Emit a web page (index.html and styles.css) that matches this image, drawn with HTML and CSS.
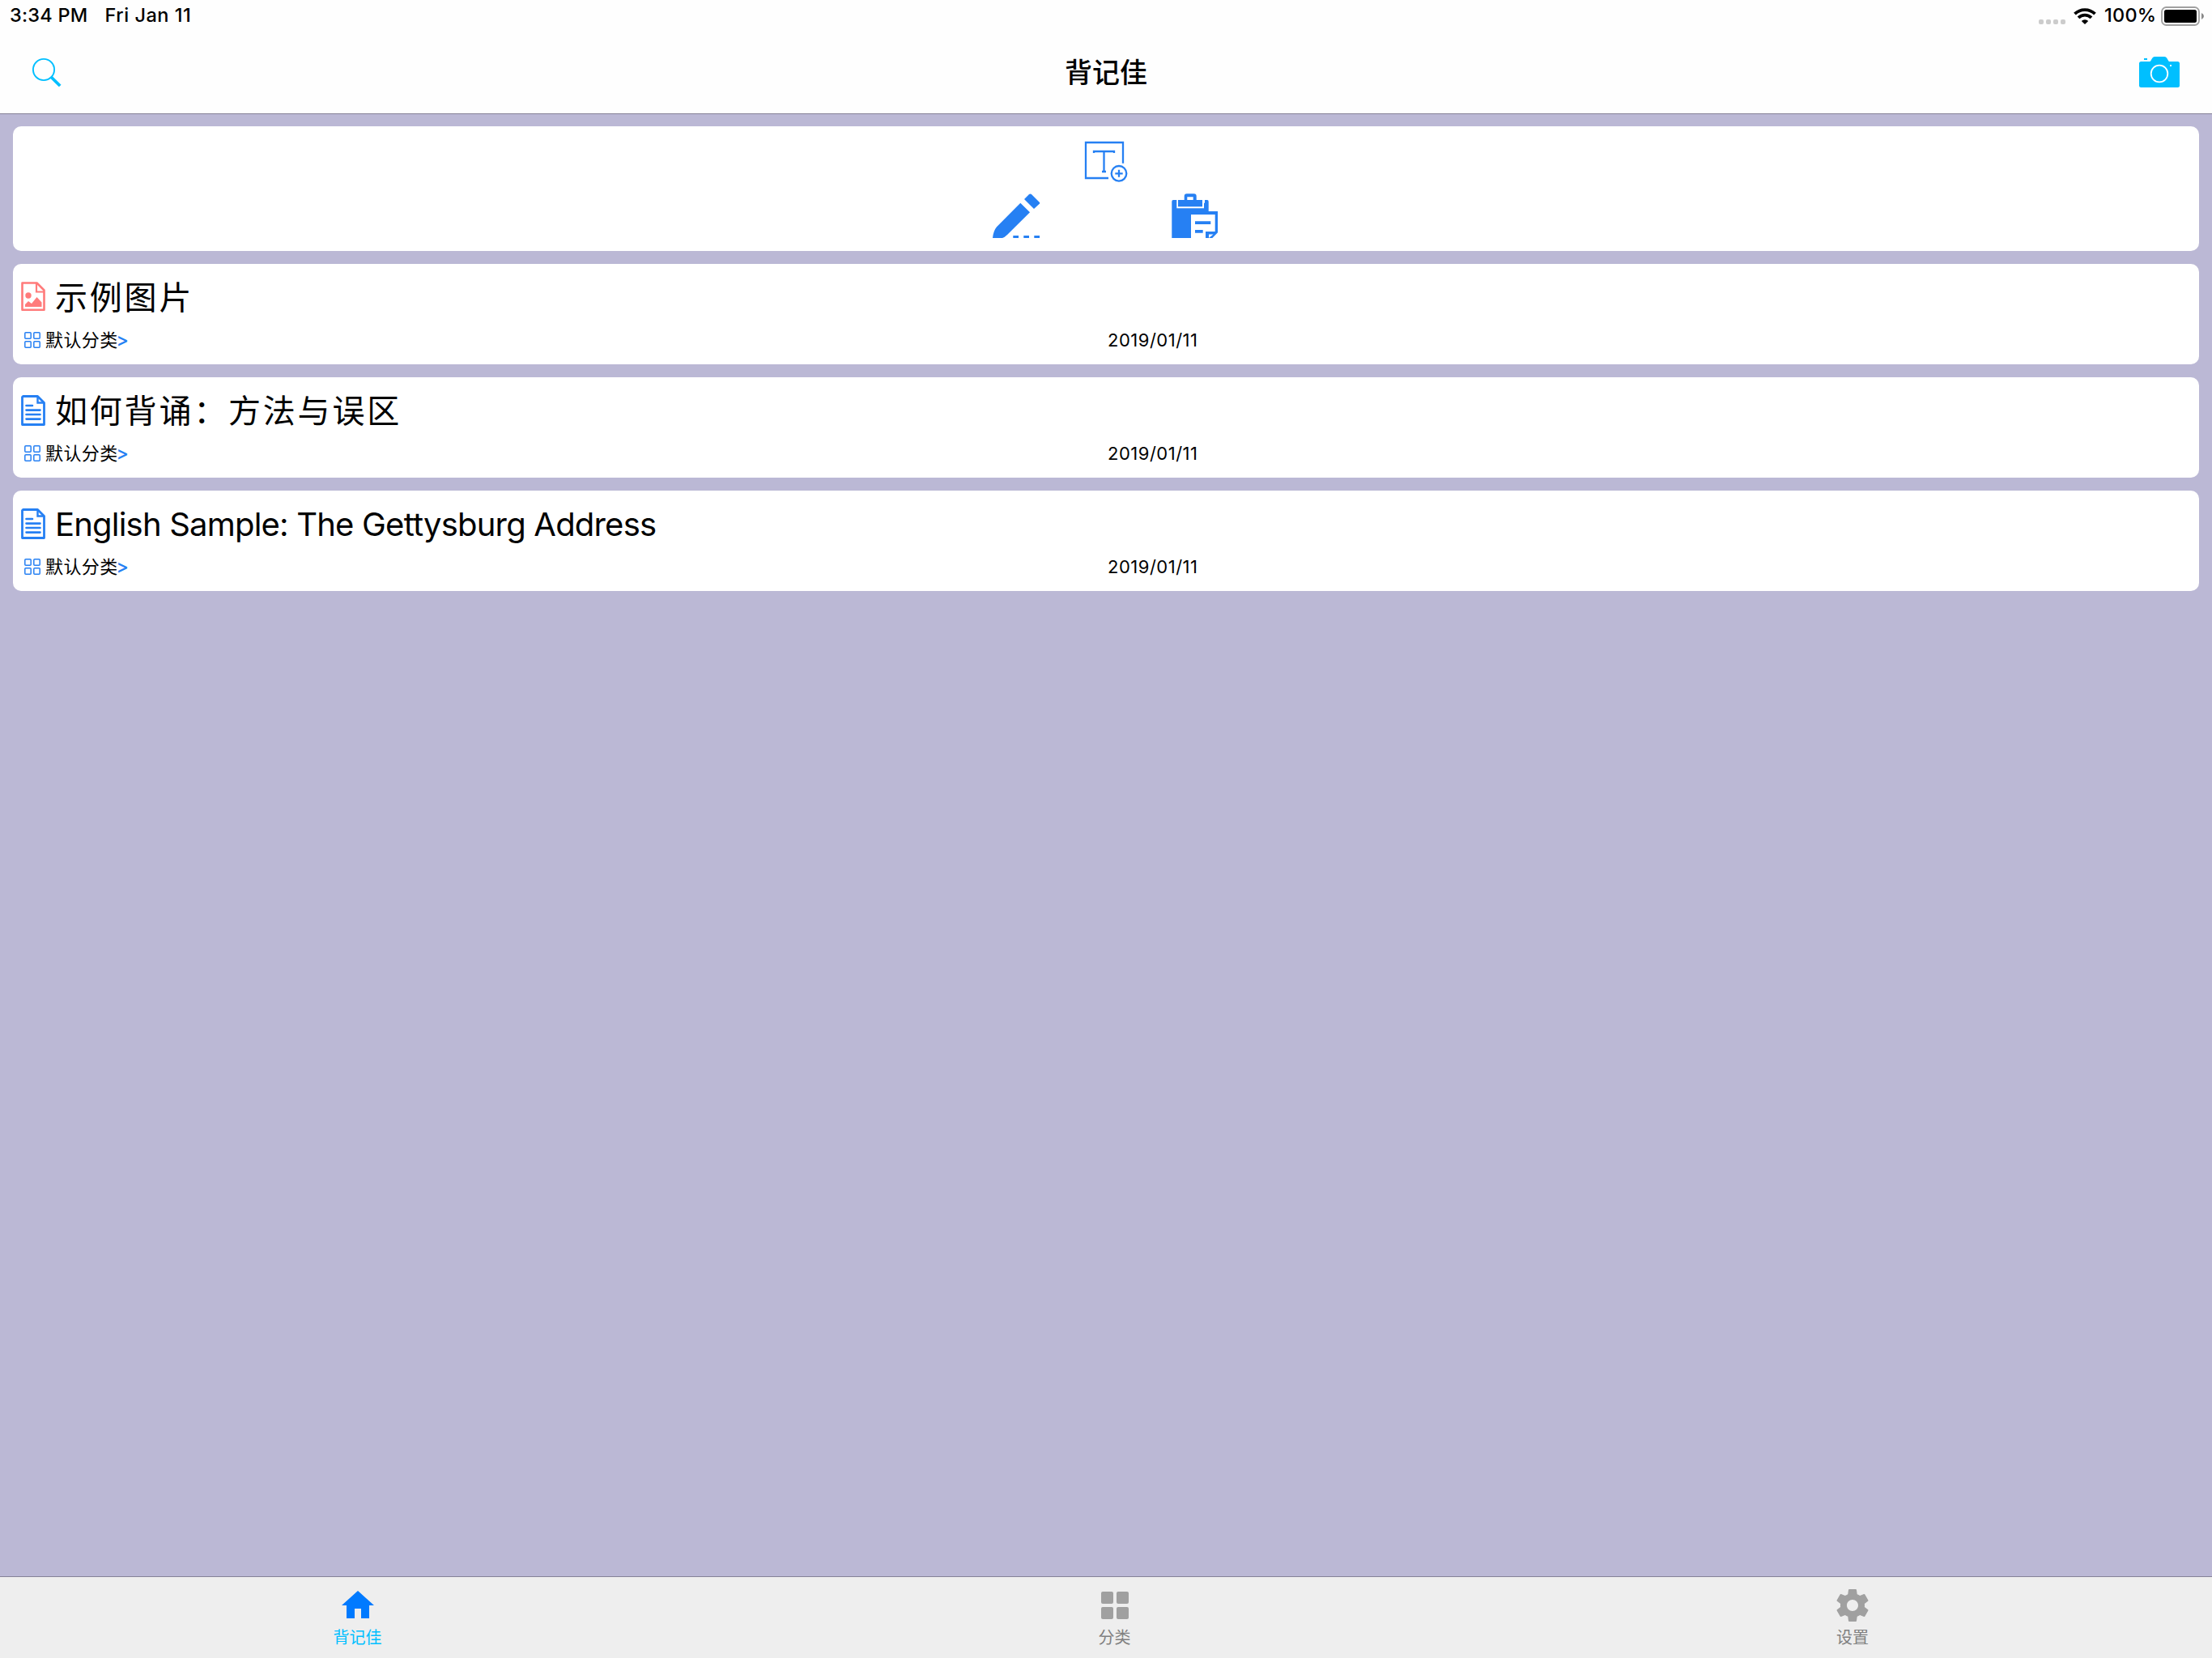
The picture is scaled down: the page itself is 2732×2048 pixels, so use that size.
FILE: index.html
```html
<!DOCTYPE html>
<html lang="zh-CN">
  <head>
    <meta charset="utf-8">
    <title>背记佳</title>
    <link rel="stylesheet" href="styles.css">
  </head>
  <body>
    <svg width="0" height="0" class="defs">
      <symbol id="doc" viewBox="0 0 30 38">
        <path d="M2.5 1.5h18l8 8v27h-27v-34z" fill="none" stroke="currentColor" stroke-width="2.8" stroke-linejoin="round"/>
        <path d="M20.5 1.5v8h8" fill="none" stroke="currentColor" stroke-width="2.4"/>
        <path d="M6.5 13h7.5M6.5 18.6h17M6.5 24h17M6.5 29.6h17" stroke="currentColor" stroke-width="2.6" stroke-linecap="round"/>
      </symbol>
      <symbol id="group" viewBox="0 0 20 20">
        <g fill="none" stroke="currentColor" stroke-width="1.5">
          <rect x=".8" y=".8" width="7.4" height="7.4" rx="1"/>
          <rect x="11.8" y=".8" width="7.4" height="7.4" rx="1"/>
          <rect x=".8" y="11.8" width="7.4" height="7.4" rx="1"/>
          <rect x="11.8" y="11.8" width="7.4" height="7.4" rx="1"/>
        </g>
      </symbol>
    </svg>

    <header>
      <div class="status">
        <span class="time">3:34 PM</span>
        <span class="date">Fri Jan 11</span>
        <span class="signal"><i></i><i></i><i></i><i></i></span>
        <svg class="wifi" width="28" height="20" viewBox="0 0 28 20">
          <g fill="none" stroke="#000" stroke-width="3.8">
            <path d="M1.5 7.2a17.8 17.8 0 0 1 25 0"/>
            <path d="M6 11.9a11.3 11.3 0 0 1 16 0"/>
          </g>
          <path d="M9.8 16a6 6 0 0 1 8.4 0L14 20z"/>
        </svg>
        <span class="percent">100%</span>
        <svg class="battery" width="54" height="24" viewBox="0 0 54 24">
          <rect x="1" y="1" width="46" height="22" rx="5.5" fill="none" stroke="#a0a0a0" stroke-width="1.8"/>
          <rect x="4" y="4" width="40" height="16" rx="2.5"/>
          <path d="M50 8q3 1.5 3 4t-3 4z" fill="#888"/>
        </svg>
      </div>
      <nav class="navbar">
        <svg width="36" height="36" viewBox="0 0 36 36" fill="none" stroke="#00bfff">
          <circle cx="14" cy="15" r="13.1" stroke-width="1.9"/>
          <path d="M23 24l11.2 11" stroke-width="3.8"/>
        </svg>
        <h1>背记佳</h1>
        <svg width="50" height="38" viewBox="0 0 50 38">
          <path d="M2.5 6h10.5c2.5 0 2-6 6.5-6h11.5c4.5 0 4 6 6.5 6h10a2.5 2.5 0 0 1 2.5 2.5v27a2.5 2.5 0 0 1-2.5 2.5h-45a2.5 2.5 0 0 1-2.5-2.5v-27a2.5 2.5 0 0 1 2.5-2.5zM6 2h4v2h-4z" fill="#00bfff"/>
          <circle cx="25" cy="21" r="10.3" fill="none" stroke="#fff" stroke-width="1.8"/>
          <path d="M38 10h2v2h-2z" fill="#fff"/>
        </svg>
      </nav>
    </header>

    <main>
      <section class="card tools">
        <svg width="60" height="60" viewBox="0 0 60 60" fill="none" stroke="#2680f3" stroke-width="2.3">
          <path d="M51 31.7V6H5v44h28"/>
          <path d="M15 19v-2h25v2M27.5 17v25M25 42h5"/>
          <circle cx="46" cy="44.300" r="9.3"/>
          <path d="M41.3 44.300h9.4M46 39.700v9"/>
        </svg>
        <div class="tools-row">
          <svg width="60" height="56" viewBox="0 0 60 56" fill="#2680f3">
            <path d="M0 56Q1 47 5 42.300L34.300 12.700 46 24.300 18 52Q15 55 12 56z"/>
            <path d="M39 8l5.500-5.500q2-2 4 0l9 9q1.500 1.500 0 2.500L51 20z"/>
            <path d="M25.300 53H32v3h-6.700zM38.300 53H45v3h-6.700zM51.300 53H58v3h-6.700z"/>
          </svg>
          <svg width="60" height="56" viewBox="0 0 60 56" fill="#2680f3">
            <path d="M3 9h4.300v10.300H41v-6.600h1V9h3q1.700 0 1.700 2V23H58v26.300L51.300 56H43v-8h11.700V27H25v29H1.300V11q0-2 1.700-2z"/>
            <path d="M9 9h7.700V4.500q0-3.200 3-3.200h9q3 0 3 3.200V9H39v8.300H9zM20.300 5.300V9h7.400V5.300z" fill-rule="evenodd"/>
            <path d="M30 35.300h19.300V39H30zM30 46h9.700v3.700H30z"/>
            <path d="M47 51.500h5.500L47 56z" fill="#fff"/>
          </svg>
        </div>
      </section>

      <article class="card">
        <div class="title">
          <svg class="image" width="30" height="38" viewBox="0 0 30 38">
            <path d="M2.5 1.5h17l9 9v24.3h-27v-33.3z" fill="none" stroke="#ff7b7b" stroke-width="2.6" stroke-linejoin="round"/>
            <path d="M19 1.500v11h10" fill="none" stroke="#ff7b7b" stroke-width="2.2"/>
            <circle cx="9" cy="17" r="3.7" fill="#ff7b7b"/>
            <path d="M5 31v-3l4-4 4 3 6.5-8 6 6.5V31z" fill="#ff7b7b"/>
          </svg>
          <h2>示例图片</h2>
        </div>
        <div class="meta">
          <div class="category"><svg width="20" height="20"><use href="#group"/></svg>默认分类<b>&gt;</b></div>
          <time>2019/01/11</time>
        </div>
      </article>

      <article class="card">
        <div class="title">
          <svg width="30" height="38"><use href="#doc"/></svg>
          <h2>如何背诵：方法与误区</h2>
        </div>
        <div class="meta">
          <div class="category"><svg width="20" height="20"><use href="#group"/></svg>默认分类<b>&gt;</b></div>
          <time>2019/01/11</time>
        </div>
      </article>

      <article class="card">
        <div class="title">
          <svg width="30" height="38"><use href="#doc"/></svg>
          <h2 class="en">English Sample: The Gettysburg Address</h2>
        </div>
        <div class="meta">
          <div class="category"><svg width="20" height="20"><use href="#group"/></svg>默认分类<b>&gt;</b></div>
          <time>2019/01/11</time>
        </div>
      </article>
    </main>

    <footer>
      <a class="tab active">
        <svg width="40" height="40" viewBox="0 0 40 40" fill="#007aff"><path d="M20 2l20 18h-6v16H24V24h-8v12H6V20H0z"/></svg>
        背记佳
      </a>
      <a class="tab">
        <svg width="40" height="40" viewBox="0 0 40 40" fill="#a0a0a0">
          <rect x="3" y="3" width="15" height="15" rx="2"/>
          <rect x="22" y="3" width="15" height="15" rx="2"/>
          <rect x="3" y="22" width="15" height="15" rx="2"/>
          <rect x="22" y="22" width="15" height="15" rx="2"/>
        </svg>
        分类
      </a>
      <a class="tab">
        <svg width="40" height="40" viewBox="2 2 20 20" fill="#a0a0a0"><path d="M19.430 12.980c.04-.32.07-.64.07-.98s-.03-.66-.07-.98l2.110-1.650c.19-.15.24-.42.12-.64l-2-3.460c-.12-.22-.39-.3-.61-.22l-2.490 1c-.52-.4-1.080-.73-1.690-.98l-.38-2.650C14.460 2.180 14.250 2 14 2h-4c-.25 0-.46.18-.49.42l-.38 2.650c-.61.25-1.170.59-1.690.98l-2.490-1c-.23-.09-.49 0-.61.22l-2 3.460c-.13.22-.07.49.12.64l2.110 1.650c-.04.32-.07.65-.07.98s.03.66.07.98l-2.110 1.650c-.19.15-.24.42-.12.64l2 3.460c.12.22.39.3.61.22l2.490-1c.52.4 1.080.73 1.690.98l.38 2.650c.03.24.24.42.49.42h4c.25 0 .46-.18.49-.42l.38-2.650c.61-.25 1.170-.59 1.690-.98l2.490 1c.23.09.49 0 .61-.22l2-3.460c.12-.22.07-.49-.12-.64l-2.110-1.650zM12 15.500c-1.930 0-3.500-1.570-3.500-3.500s1.570-3.500 3.500-3.500 3.500 1.570 3.500 3.500-1.570 3.500-3.500 3.500z"/></svg>
        设置
      </a>
    </footer>
  </body>
</html>
```

FILE: styles.css
```css
* {
    box-sizing: border-box;
}
body {
    margin: 0;
    height: 2048px;
    display: flex;
    flex-direction: column;
    background: #bbb8d5;
    color: #000;
    font-family: Inter, "Noto Sans CJK SC", sans-serif;
}
svg {
    display: block;
    flex: none;
}
.defs {
    position: absolute;
}
h1, h2 {
    margin: 0;
}
header {
    height: 141px;
    background: #fefefe;
    border-bottom: 1px solid #858197;
}
.status {
    display: flex;
    align-items: center;
    height: 40px;
    padding: 0 9px 0 12px;
    font-size: 23.5px;
    font-weight: 500;
    letter-spacing: .25px;
    line-height: 38px;
    white-space: nowrap;
}
.time, .date, .percent {
    height: 40px;
}
.date {
    margin-left: 21px;
    letter-spacing: .5px;
}
.signal {
    display: flex;
    gap: 3px;
    margin: 14px 10px 0 auto;
}
.signal i {
    width: 6px;
    height: 6px;
    border-radius: 2px;
    background: #ccc;
}
.percent {
    width: 64px;
    margin: 0 6px 0 10px;
}
.navbar {
    display: grid;
    grid-template-columns: 1fr auto 1fr;
    align-items: center;
    height: 98px;
    padding: 0 40px;
}
.navbar svg:last-child {
    justify-self: end;
}
h1 {
    font-size: 34px;
    font-weight: 500;
    line-height: 50px;
    padding-top: 2px;
}
main {
    flex: 1;
    display: flex;
    flex-direction: column;
    gap: 16px;
    padding: 15px 16px;
}
.card {
    height: 124px;
    border-radius: 10px;
    background: #fff;
}
.tools {
    height: 154px;
    padding-top: 14px;
    display: flex;
    flex-direction: column;
    align-items: center;
    gap: 8px;
}
.tools-row {
    display: flex;
    gap: 160px;
}
.title {
    display: flex;
    align-items: center;
    height: 82px;
    padding-left: 10px;
    gap: 12px;
    color: #2680f3;
}
h2 {
    padding-top: 2px;
    color: #000;
    font-size: 40px;
    font-weight: 400;
    line-height: 60px;
    letter-spacing: 2.8px;
}
.en {
    letter-spacing: -.8px;
}
.meta {
    display: grid;
    grid-template-columns: 1fr 1fr;
    height: 24px;
    line-height: 24px;
    font-size: 22px;
}
.category {
    display: flex;
    align-items: center;
    padding-left: 14px;
    letter-spacing: .4px;
}
.category svg {
    margin-right: 6px;
    color: #2680f3;
}
.category b {
    margin-left: -2px;
    color: #2680f3;
    font-size: 23px;
    font-weight: 500;
}
time {
    padding-left: 2px;
    letter-spacing: .5px;
}
footer {
    display: grid;
    grid-template-columns: 883px 987px 836px;
    height: 101px;
    background: #eee;
    border-top: 1px solid #858197;
}
.tab {
    display: flex;
    flex-direction: column;
    align-items: center;
    height: 100px;
    padding-top: 15px;
    color: #808080;
    font-size: 20px;
    line-height: 41px;
}
.active {
    color: #00bfff;
}
```
